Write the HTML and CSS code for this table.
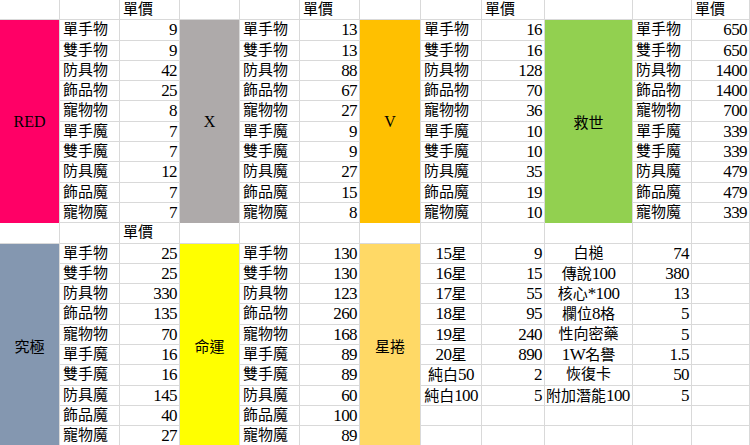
FILE: index.html
```html
<!DOCTYPE html>
<html>
<head>
<meta charset="utf-8">
<link rel="stylesheet" href="styles.css">
</head>
<body>
<div class="sheet">
  <div class="merge top colA pink"><span class="d">RED</span></div>
  <div class="merge top colD gray"><span class="d">X</span></div>
  <div class="merge top colG orange"><span class="d">V</span></div>
  <div class="merge top colJ green">救世</div>
  <div class="merge bot colA slate">究極</div>
  <div class="merge bot colD yellow">命運</div>
  <div class="merge bot colG lorange">星捲</div>

  <!-- row 1 -->
  <div class="c"></div><div class="c"></div><div class="c h">單價</div>
  <div class="c"></div><div class="c"></div><div class="c h">單價</div>
  <div class="c"></div><div class="c"></div><div class="c h">單價</div>
  <div class="c"></div><div class="c"></div><div class="c h">單價</div>

  <!-- rows 2-11 -->
  <div class="c l">單手物</div><div class="c n">9</div><div class="c l">單手物</div><div class="c n">13</div><div class="c l">單手物</div><div class="c n">16</div><div class="c l">單手物</div><div class="c n">650</div>
  <div class="c l">雙手物</div><div class="c n">9</div><div class="c l">雙手物</div><div class="c n">13</div><div class="c l">雙手物</div><div class="c n">16</div><div class="c l">雙手物</div><div class="c n">650</div>
  <div class="c l">防具物</div><div class="c n">42</div><div class="c l">防具物</div><div class="c n">88</div><div class="c l">防具物</div><div class="c n">128</div><div class="c l">防具物</div><div class="c n">1400</div>
  <div class="c l">飾品物</div><div class="c n">25</div><div class="c l">飾品物</div><div class="c n">67</div><div class="c l">飾品物</div><div class="c n">70</div><div class="c l">飾品物</div><div class="c n">1400</div>
  <div class="c l">寵物物</div><div class="c n">8</div><div class="c l">寵物物</div><div class="c n">27</div><div class="c l">寵物物</div><div class="c n">36</div><div class="c l">寵物物</div><div class="c n">700</div>
  <div class="c l">單手魔</div><div class="c n">7</div><div class="c l">單手魔</div><div class="c n">9</div><div class="c l">單手魔</div><div class="c n">10</div><div class="c l">單手魔</div><div class="c n">339</div>
  <div class="c l">雙手魔</div><div class="c n">7</div><div class="c l">雙手魔</div><div class="c n">9</div><div class="c l">雙手魔</div><div class="c n">10</div><div class="c l">雙手魔</div><div class="c n">339</div>
  <div class="c l">防具魔</div><div class="c n">12</div><div class="c l">防具魔</div><div class="c n">27</div><div class="c l">防具魔</div><div class="c n">35</div><div class="c l">防具魔</div><div class="c n">479</div>
  <div class="c l">飾品魔</div><div class="c n">7</div><div class="c l">飾品魔</div><div class="c n">15</div><div class="c l">飾品魔</div><div class="c n">19</div><div class="c l">飾品魔</div><div class="c n">479</div>
  <div class="c l">寵物魔</div><div class="c n">7</div><div class="c l">寵物魔</div><div class="c n">8</div><div class="c l">寵物魔</div><div class="c n">10</div><div class="c l">寵物魔</div><div class="c n">339</div>

  <!-- row 12 -->
  <div class="c"></div><div class="c"></div><div class="c h">單價</div>
  <div class="c"></div><div class="c"></div><div class="c"></div>
  <div class="c"></div><div class="c"></div><div class="c"></div>
  <div class="c"></div><div class="c"></div><div class="c"></div>

  <!-- rows 13-22 -->
  <div class="c l">單手物</div><div class="c n">25</div><div class="c l">單手物</div><div class="c n">130</div><div class="c m"><span class="d">15</span>星</div><div class="c n">9</div><div class="c m">白槌</div><div class="c n">74</div><div class="c"></div>
  <div class="c l">雙手物</div><div class="c n">25</div><div class="c l">雙手物</div><div class="c n">130</div><div class="c m"><span class="d">16</span>星</div><div class="c n">15</div><div class="c m">傳說<span class="d">100</span></div><div class="c n">380</div><div class="c"></div>
  <div class="c l">防具物</div><div class="c n">330</div><div class="c l">防具物</div><div class="c n">123</div><div class="c m"><span class="d">17</span>星</div><div class="c n">55</div><div class="c m">核心<span class="d">*100</span></div><div class="c n">13</div><div class="c"></div>
  <div class="c l">飾品物</div><div class="c n">135</div><div class="c l">飾品物</div><div class="c n">260</div><div class="c m"><span class="d">18</span>星</div><div class="c n">95</div><div class="c m">欄位<span class="d">8</span>格</div><div class="c n">5</div><div class="c"></div>
  <div class="c l">寵物物</div><div class="c n">70</div><div class="c l">寵物物</div><div class="c n">168</div><div class="c m"><span class="d">19</span>星</div><div class="c n">240</div><div class="c m">性向密藥</div><div class="c n">5</div><div class="c"></div>
  <div class="c l">單手魔</div><div class="c n">16</div><div class="c l">單手魔</div><div class="c n">89</div><div class="c m"><span class="d">20</span>星</div><div class="c n">890</div><div class="c m"><span class="d">1W</span>名譽</div><div class="c n">1.5</div><div class="c"></div>
  <div class="c l">雙手魔</div><div class="c n">16</div><div class="c l">雙手魔</div><div class="c n">89</div><div class="c m">純白<span class="d">50</span></div><div class="c n">2</div><div class="c m">恢復卡</div><div class="c n">50</div><div class="c"></div>
  <div class="c l">防具魔</div><div class="c n">145</div><div class="c l">防具魔</div><div class="c n">60</div><div class="c m">純白<span class="d">100</span></div><div class="c n">5</div><div class="c m tight">附加潛能<span class="d">100</span></div><div class="c n">5</div><div class="c"></div>
  <div class="c l">飾品魔</div><div class="c n">40</div><div class="c l">飾品魔</div><div class="c n">100</div><div class="c"></div><div class="c"></div><div class="c"></div><div class="c"></div><div class="c"></div>
  <div class="c l">寵物魔</div><div class="c n">27</div><div class="c l">寵物魔</div><div class="c n">89</div><div class="c"></div><div class="c"></div><div class="c"></div><div class="c"></div><div class="c"></div>
</div>
</body>
</html>
```

FILE: styles.css
```css
html, body {
  margin: 0;
  padding: 0;
  background: #ffffff;
}

.sheet {
  display: grid;
  grid-template-columns: 60px 60px 60px 60px 60px 60px 61px 61px 63px 88px 59px 58px;
  grid-template-rows: repeat(22, 20.3px);
  width: 750px;
  height: 445px;
  overflow: hidden;
  font-family: "Liberation Serif", "Noto Sans CJK TC", serif;
  color: #000000;
}

.c {
  box-sizing: border-box;
  border-right: 1px solid #d9d9d9;
  border-bottom: 1px solid #d9d9d9;
  font-size: 15px;
  line-height: 19px;
  white-space: nowrap;
  overflow: visible;
}

.h {
  padding-left: 3px;
}

.l {
  padding-left: 3px;
}

.n {
  text-align: right;
  padding-right: 2px;
  font-size: 17px;
  letter-spacing: -0.6px;
}

.d {
  font-size: 17px;
  letter-spacing: -0.6px;
}

.m {
  text-align: center;
}

.tight {
  text-align: left;
  padding-left: 1px;
}

.merge {
  display: flex;
  align-items: center;
  justify-content: center;
  font-size: 15px;
  box-sizing: border-box;
  border-right: 1px solid #d9d9d9;
}

.merge .d {
  font-size: 16px;
  letter-spacing: 0;
}

.top { grid-row: 2 / span 10; }
.bot { grid-row: 13 / span 10; }
.colA { grid-column: 1; }
.colD { grid-column: 4; }
.colG { grid-column: 7; }
.colJ { grid-column: 10; }

.pink { background: #ff0066; }
.gray { background: #aeaaaa; }
.orange { background: #ffc000; }
.green { background: #92d050; }
.slate { background: #8497b0; }
.yellow { background: #ffff00; }
.lorange { background: #ffd966; }
```
